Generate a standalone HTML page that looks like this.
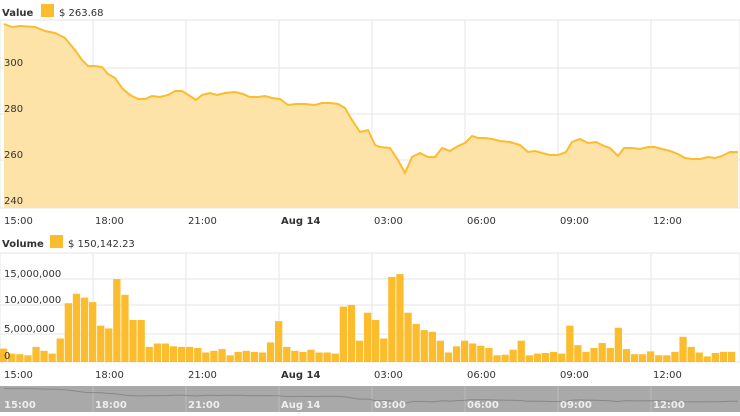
<!DOCTYPE html>
<html><head><meta charset="utf-8"><style>
body{margin:0;width:740px;height:416px;background:#fff;overflow:hidden;font-family:"Liberation Sans",sans-serif}
svg{display:block}
text{font-family:"DejaVu Sans","Liberation Sans",sans-serif;font-size:10px;fill:#333}
</style></head><body>
<svg id="s" width="740" height="416" xmlns="http://www.w3.org/2000/svg">
<text x="2" y="16" font-weight="bold">Value</text>
<rect x="41" y="4" width="13" height="13" fill="#fbbd2d"/>
<text x="59" y="16">$ 263.68</text>
<rect x="0" y="20" width="740" height="188" fill="#fff" stroke="#e6e6e6"/>
<g id="vg"></g>
<path id="area" fill="#fde3a7" stroke="none"/>
<path id="line" fill="none" stroke="#fbbd2d" stroke-width="2"/>
<text x="4" y="66">300</text><text x="4" y="112">280</text><text x="4" y="158">260</text><text x="4" y="204">240</text>
<g id="xl1"></g>
<text x="2" y="247" font-weight="bold">Volume</text>
<rect x="50" y="235" width="13" height="13" fill="#fbbd2d"/>
<text x="68" y="247">$ 150,142.23</text>
<rect x="0" y="253" width="740" height="109" fill="#fff" stroke="#e6e6e6"/>
<g id="vg2"></g>
<g id="bars"></g>
<text x="4" y="277">15,000,000</text><text x="4" y="303">10,000,000</text><text x="4" y="332">5,000,000</text><text x="4" y="359">0</text>
<g id="xl2"></g>
<rect x="0" y="386" width="740" height="26" fill="#a9a9a9"/>
<g id="vg3"></g>
<path id="nav" fill="none" stroke="#888" stroke-width="1"/>
<g id="xl3"></g>
</svg>
<script>
const NS="http://www.w3.org/2000/svg";
function el(p,t,a,txt){const e=document.createElementNS(NS,t);for(const k in a)e.setAttribute(k,a[k]);if(txt)e.textContent=txt;document.getElementById(p).appendChild(e);}
const gx=[93,186,279,372,465,558,651];
gx.forEach(x=>{el("vg","line",{x1:x,y1:20,x2:x,y2:208,stroke:"#e6e6e6"});el("vg2","line",{x1:x,y1:253,x2:x,y2:362,stroke:"#e6e6e6"});el("vg3","line",{x1:x,y1:386,x2:x,y2:412,stroke:"#bbb"});});
[68,114,160].forEach(y=>el("vg","line",{x1:0,y1:y,x2:740,y2:y,stroke:"#e6e6e6"}));
[279,305,334].forEach(y=>el("vg2","line",{x1:0,y1:y,x2:740,y2:y,stroke:"#e6e6e6"}));
const lab=["15:00","18:00","21:00","Aug 14","03:00","06:00","09:00","12:00"];
lab.forEach((l,i)=>{const x=i==0?4:gx[i-1]+2;const b=l=="Aug 14"?{"font-weight":"bold"}:{};
el("xl1","text",Object.assign({x:x,y:224},b),l);el("xl2","text",Object.assign({x:x,y:378},b),l);
el("xl3","text",{x:x,y:408,style:"fill:#eee;font-weight:bold"},l);});
const P=[[4,24],[12,27],[20,26],[35,27],[45,31],[55,33],[65,38],[75,50],[82,60],[88,66],[95,66],[102,67],[108,74],[115,78],[122,88],[130,95],[138,99],[145,99],[152,96],[160,97],[168,95],[175,91],[182,91],[190,96],[196,100],[202,95],[210,93],[217,95],[225,93],[235,92],[243,94],[250,97],[258,97],[265,96],[272,98],[280,99],[288,105],[296,104],[305,104],[315,105],[322,103],[330,103],[338,104],[345,108],[352,120],[360,132],[368,130],[375,145],[380,147],[390,148],[398,160],[405,173],[412,157],[420,153],[428,157],[435,157],[442,148],[450,151],[458,146],[465,143],[472,136],[478,138],[485,138],[492,139],[500,141],[510,142],[520,145],[528,152],[535,151],[542,153],[550,155],[558,155],[566,152],[572,142],[580,139],[588,143],[596,142],[604,146],[610,148],[618,156],[624,148],[632,148],[640,149],[648,147],[655,147],[662,149],[670,151],[678,154],[685,158],[692,159],[700,159],[708,157],[715,158],[722,156],[730,152],[738,152]];
const d="M"+P.map(p=>p.join(",")).join(" L");
document.getElementById("line").setAttribute("d",d);
document.getElementById("area").setAttribute("d",d+" L738,208 L4,208 Z");
document.getElementById("nav").setAttribute("d","M"+P.map(p=>p[0]+","+(388+(p[1]-20)*0.1).toFixed(1)).join(" L"));
const V=[2.4,1.5,1.4,1.2,2.7,2,1.5,4.2,10.5,12.2,11.5,10.7,6.5,6,14.8,12,7.5,7.5,2.7,3.3,3.3,2.8,2.7,2.7,2.5,1.7,2,2.3,1.2,1.8,2,1.8,1.7,3.5,7.3,2.7,2,1.8,2.2,1.7,1.7,1.5,9.9,10.2,3.8,8.8,7.5,4.2,15.2,15.7,8.8,6.8,5.7,5.4,3.8,1.7,2.8,3.8,3.3,2.9,2.5,1.2,1.3,2.2,3.8,1.2,1.5,1.6,1.8,1.5,6.5,3,1.8,2.5,3.4,2.5,6.1,2.3,1.4,1.4,1.9,1.2,1.2,1.8,4.5,2.7,1.7,1.0,1.6,1.8,1.8];
const w=(736-0)/V.length;
V.forEach((v,i)=>{const h=v*5.6;el("bars","rect",{x:(i*w).toFixed(1),y:(362-h).toFixed(1),width:(w-0.8).toFixed(1),height:h.toFixed(1),fill:"#fbbd2d"});});
</script>
</body></html>
